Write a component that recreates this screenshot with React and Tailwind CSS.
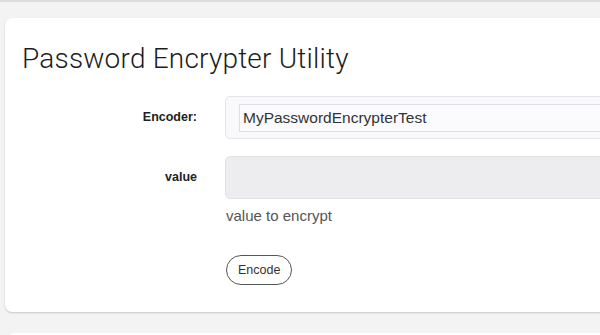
import React from 'react';

const Field = ({ label, children }) => (
  <div className="flex items-center">
    <label className="w-[192px] shrink-0 text-right text-[12.5px] font-bold text-[#222]">{label}</label>
    <div className="ml-[28px] flex-1">{children}</div>
  </div>
);

export default function App() {
  return (
    <div
      className="h-[335px] w-[600px] overflow-hidden bg-[#f3f3f3] border-t-2 border-[#dcdcdc]"
      style={{ fontFamily: '"Liberation Sans", Arial, sans-serif' }}
    >
      <div className="pt-[16px] pl-[5px]">
        <div className="w-[640px] h-[294px] rounded-[7px] bg-white shadow-[0_1px_2px_rgba(0,0,0,0.18)] pt-[25px]">
          <h1
            className="pl-[17px] text-[28px] leading-[32px] font-light text-[#1c1c1c] tracking-[0.2px]"
            style={{ fontFamily: 'Roboto, "Liberation Sans", sans-serif' }}
          >
            Password Encrypter Utility
          </h1>

          <div className="mt-[21px] flex flex-col gap-[17px]">
            <Field label="Encoder:">
              <div className="h-[43px] rounded-[5px] border border-[#e4e4ea] bg-[#f9f9fc] pl-[13px] pt-[7px]">
                <div className="h-[28px] border border-[#dedee3] bg-[#fbfbfd] pl-[3px] text-[15.5px] leading-[26px] text-[#333]">
                  MyPasswordEncrypterTest
                </div>
              </div>
            </Field>
            <Field label="value">
              <div className="h-[43px] rounded-[5px] border border-[#e2e2e6] bg-[#ededf0]" />
            </Field>
          </div>

          <p className="ml-[221px] mt-[8px] text-[15px] leading-[18px] text-[#555]">value to encrypt</p>

          <button className="ml-[221px] mt-[30px] h-[30px] px-[11px] rounded-full border border-[#555] bg-white text-[12.5px] text-[#333]">
            Encode
          </button>
        </div>
        <div className="mt-[21px] ml-[3px] w-[640px] h-[20px] rounded-[7px] bg-white" />
      </div>
    </div>
  );
}
